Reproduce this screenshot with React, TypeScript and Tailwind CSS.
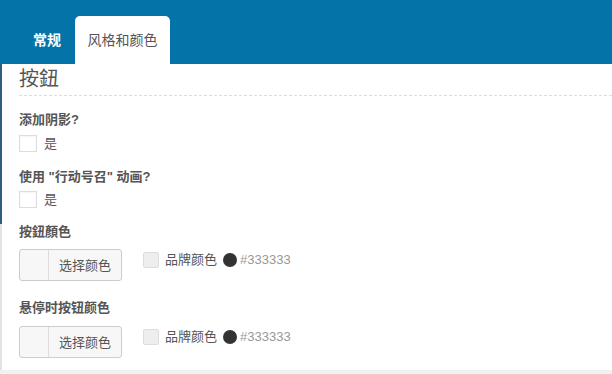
import React from 'react';

const font = "font-['Liberation_Sans','Noto_Sans_CJK_SC',sans-serif]";

interface ColorFieldProps {
  label: string;
  labelGap: string;
  buttonGap: string;
}

const ColorField: React.FC<ColorFieldProps> = ({ label, labelGap, buttonGap }) => (
  <div>
    <div className={`${labelGap} h-[18px] leading-[18px] text-[13px] font-bold text-[#555]`}>{label}</div>
    <div className={`${buttonGap} flex h-[32px] items-center`}>
      <div className="flex h-[32px] w-[103px] rounded-[3px] border border-[#cccccc] bg-[#f7f7f7]">
        <div className="w-[29px] border-r border-[#dcdcdc]" />
        <div className="flex flex-1 items-center justify-center pt-[2px] text-[13px] leading-[18px] text-[#555]">选择颜色</div>
      </div>
      <div className="ml-[21px] mb-[10px] flex items-center leading-[18px]">
        <div className="h-[16px] w-[16px] rounded-[2px] border border-[#dddddd] bg-[#eeeeee]" />
        <span className="ml-[6px] text-[13px] text-[#555]">品牌颜色</span>
        <span className="ml-[6px] h-[14px] w-[14px] rounded-full bg-[#333333]" />
        <span className="ml-[3px] text-[13px] text-[#999]">#333333</span>
      </div>
    </div>
  </div>
);

interface CheckFieldProps {
  label: string;
  labelGap: string;
  boxGap: string;
}

const CheckField: React.FC<CheckFieldProps> = ({ label, labelGap, boxGap }) => (
  <div>
    <div className={`${labelGap} h-[18px] leading-[18px] text-[13px] font-bold text-[#555]`}>{label}</div>
    <div className={`${boxGap} flex h-[17px] items-center leading-[17px]`}>
      <div className="h-[17px] w-[18px] border border-[#dddddd] bg-white shadow-[inset_0_1px_2px_rgba(0,0,0,0.05)]" />
      <span className="ml-[7px] text-[13px] text-[#555]">是</span>
    </div>
  </div>
);

export default function App() {
  return (
    <div className={`flex h-[374px] w-[612px] flex-col overflow-hidden bg-[#f1f1f1] ${font}`}>
      <div className="flex h-[64px] shrink-0 items-end bg-[#0473a8] pl-[19px]">
        <div className="flex h-[48px] items-center px-[14px] text-[14px] font-bold text-white">常规</div>
        <div className="flex h-[48px] w-[95px] items-center justify-center rounded-t-[5px] bg-white text-[14px] text-[#555]">
          风格和颜色
        </div>
      </div>
      <div className="flex h-[306px] shrink-0">
        <div className="flex w-[2px] flex-col">
          <div className="h-[160px] bg-[#2c5f7e]" />
          <div className="flex-1 bg-[#e2e2e2]" />
        </div>
        <div className="flex-1 bg-white pl-[17px]">
          <div className="mt-[2px] border-b border-dashed border-[#dddddd] pb-[3px] text-[20px] leading-[26px] text-[#555]">
            按鈕
          </div>
          <CheckField label="添加阴影?" labelGap="mt-[15px]" boxGap="mt-[6px]" />
          <CheckField label={'使用 "行动号召" 动画?'} labelGap="mt-[16px]" boxGap="mt-[5px]" />
          <ColorField label="按鈕顏色" labelGap="mt-[15px]" buttonGap="mt-[8px]" />
          <ColorField label="悬停时按钮颜色" labelGap="mt-[18px]" buttonGap="mt-[9px]" />
        </div>
      </div>
    </div>
  );
}
